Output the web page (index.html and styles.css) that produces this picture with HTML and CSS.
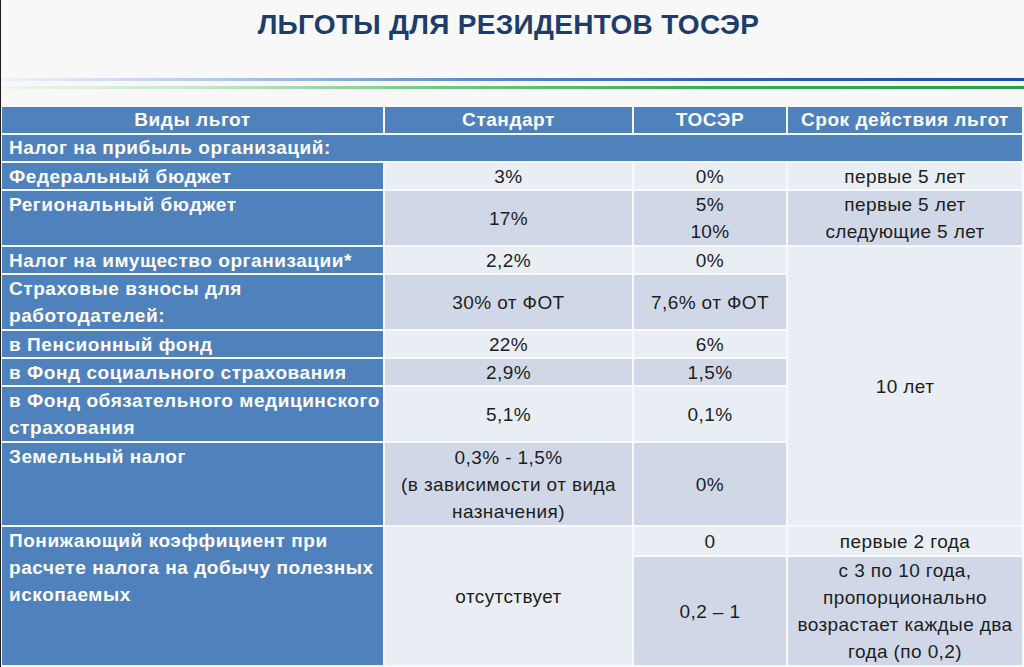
FILE: index.html
```html
<!DOCTYPE html>
<html lang="ru">
<head>
<meta charset="utf-8">
<title>Льготы для резидентов ТОСЭР</title>
<link rel="stylesheet" href="styles.css">
</head>
<body>
<div class="page">
  <header class="top">
    <h1 class="title">ЛЬГОТЫ ДЛЯ РЕЗИДЕНТОВ ТОСЭР</h1>
    <div class="rule rule-blue"></div>
    <div class="rule rule-green"></div>
  </header>
  <div class="grid">
    <div class="cell hd">Виды льгот</div>
    <div class="cell hd">Стандарт</div>
    <div class="cell hd">ТОСЭР</div>
    <div class="cell hd">Срок действия льгот</div>

    <div class="cell lbl full">Налог на прибыль организаций:</div>

    <div class="cell lbl">Федеральный бюджет</div>
    <div class="cell lt">3%</div>
    <div class="cell lt">0%</div>
    <div class="cell lt">первые 5 лет</div>

    <div class="cell lbl">Региональный бюджет</div>
    <div class="cell dk">17%</div>
    <div class="cell dk">5%<br>10%</div>
    <div class="cell dk">первые 5 лет<br>следующие 5 лет</div>

    <div class="cell lbl">Налог на имущество организации*</div>
    <div class="cell lt">2,2%</div>
    <div class="cell lt">0%</div>
    <div class="cell lt span6">10 лет</div>

    <div class="cell lbl">Страховые взносы для работодателей:</div>
    <div class="cell dk">30% от ФОТ</div>
    <div class="cell dk">7,6% от ФОТ</div>

    <div class="cell lbl">в Пенсионный фонд</div>
    <div class="cell lt">22%</div>
    <div class="cell lt">6%</div>

    <div class="cell lbl">в Фонд социального страхования</div>
    <div class="cell dk">2,9%</div>
    <div class="cell dk">1,5%</div>

    <div class="cell lbl">в Фонд обязательного медицинского страхования</div>
    <div class="cell lt">5,1%</div>
    <div class="cell lt">0,1%</div>

    <div class="cell lbl">Земельный налог</div>
    <div class="cell dk">0,3% - 1,5%<br>(в зависимости от вида назначения)</div>
    <div class="cell dk">0%</div>

    <div class="cell lbl span2">Понижающий коэффициент при расчете налога на добычу полезных ископаемых</div>
    <div class="cell lt span2">отсутствует</div>
    <div class="cell lt">0</div>
    <div class="cell lt">первые 2 года</div>
    <div class="cell dk">0,2 – 1</div>
    <div class="cell dk">с 3 по 10 года, пропорционально возрастает каждые два года (по 0,2)</div>
  </div>
</div>
</body>
</html>
```
FILE: styles.css
```css
html, body {
  margin: 0;
  padding: 0;
  background: #f8f8f8;
}
body {
  font-family: "Liberation Sans", Arial, sans-serif;
}
.page {
  width: 1023px;
  height: 667px;
  border-left: 1px solid #1e1e1e;
  overflow: hidden;
}
.top {
  padding-top: 9px;
}
.title {
  margin: 0;
  font-size: 28px;
  line-height: 32px;
  font-weight: bold;
  letter-spacing: 0.3px;
  color: #1f3d6b;
  text-align: center;
  padding-right: 8px;
}
.rule {
  height: 3px;
}
.rule-blue {
  margin-top: 37px;
  background: linear-gradient(to right, #eef2fa 0%, #b9cbe9 20%, #5f8fd6 45%, #2a62c2 70%, #1550b6 100%);
}
.rule-green {
  margin-top: 5px;
  background: linear-gradient(to right, #eef6f0 0%, #c2e4c9 20%, #6cc383 45%, #36ad56 70%, #21a346 100%);
}
.grid {
  margin-top: 18px;
  margin-left: 1px;
  display: grid;
  grid-template-columns: 381px 247px 152px 234px;
  grid-template-rows: 26px 26px 26px 54px 26px 54px 26px 26px 54px 82px 28px 108px;
  gap: 2px;
  font-size: 19px;
  line-height: 27px;
  letter-spacing: 0.4px;
}
.cell {
  overflow: hidden;
}
.hd {
  background: #4f81bd;
  color: #fff;
  font-weight: bold;
  letter-spacing: 0.55px;
  text-align: center;
  line-height: 26px;
}
.lbl {
  background: #4f81bd;
  color: #fff;
  font-weight: bold;
  letter-spacing: 0.55px;
  padding-left: 7px;
}
.full {
  grid-column: span 4;
  line-height: 26px;
}
.lt, .dk {
  color: #1e1e1e;
  display: flex;
  align-items: center;
  justify-content: center;
  text-align: center;
  padding: 0 6px;
}
.lt {
  background: #e9edf4;
}
.dk {
  background: #d0d8e8;
}
.span6 {
  grid-row: span 6;
}
.span2 {
  grid-row: span 2;
}
```
